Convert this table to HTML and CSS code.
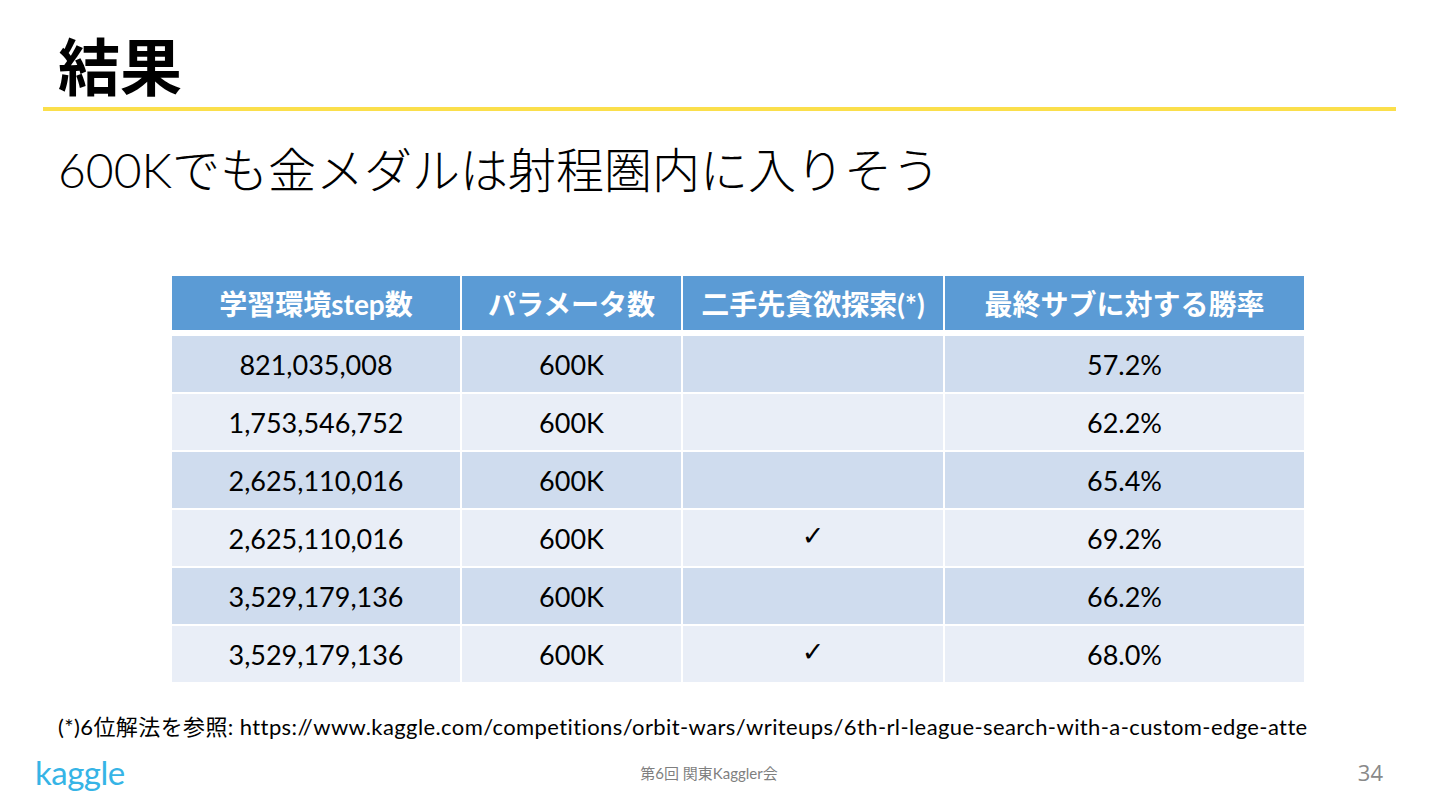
FILE: index.html
```html
<!DOCTYPE html>
<html lang="ja">
<head>
<meta charset="utf-8">
<title>結果</title>
<link rel="stylesheet" href="styles.css">
</head>
<body>
<div class="slide">
  <h1 class="title">結果</h1>
  <div class="rule"></div>
  <p class="subtitle">600Kでも金メダルは射程圏内に入りそう</p>

  <div class="table">
    <div class="row head">
      <div class="cell">学習環境step数</div>
      <div class="cell">パラメータ数</div>
      <div class="cell">二手先貪欲探索(*)</div>
      <div class="cell">最終サブに対する勝率</div>
    </div>
    <div class="row odd">
      <div class="cell">821,035,008</div>
      <div class="cell">600K</div>
      <div class="cell"></div>
      <div class="cell">57.2%</div>
    </div>
    <div class="row even">
      <div class="cell">1,753,546,752</div>
      <div class="cell">600K</div>
      <div class="cell"></div>
      <div class="cell">62.2%</div>
    </div>
    <div class="row odd">
      <div class="cell">2,625,110,016</div>
      <div class="cell">600K</div>
      <div class="cell"></div>
      <div class="cell">65.4%</div>
    </div>
    <div class="row even">
      <div class="cell">2,625,110,016</div>
      <div class="cell">600K</div>
      <div class="cell"><span class="check">✓</span></div>
      <div class="cell">69.2%</div>
    </div>
    <div class="row odd">
      <div class="cell">3,529,179,136</div>
      <div class="cell">600K</div>
      <div class="cell"></div>
      <div class="cell">66.2%</div>
    </div>
    <div class="row even">
      <div class="cell">3,529,179,136</div>
      <div class="cell">600K</div>
      <div class="cell"><span class="check">✓</span></div>
      <div class="cell">68.0%</div>
    </div>
  </div>

  <p class="note">(*)6位解法を参照: https://www.kaggle.com/competitions/orbit-wars/writeups/6th-rl-league-search-with-a-custom-edge-atte</p>

  <div class="footer">
    <div class="logo">kaggle</div>
    <div class="event">第6回 関東Kaggler会</div>
    <div class="page">34</div>
  </div>
</div>
</body>
</html>
```

FILE: styles.css
```css
html, body {
  margin: 0;
  padding: 0;
  background: #ffffff;
}

.slide {
  width: 1440px;
  height: 810px;
  display: flex;
  flex-direction: column;
  overflow: hidden;
  font-family: Lato, "Noto Sans CJK JP", sans-serif;
  color: #000000;
}

.title {
  margin: 33px 0 0 58px;
  font-family: "Noto Sans CJK JP", sans-serif;
  font-weight: 700;
  font-size: 62px;
  line-height: 62px;
  height: 62px;
}

.rule {
  margin: 12px 44px 0 43px;
  height: 4px;
  background: #fbdf4b;
}

.subtitle {
  margin: 35px 0 0 58px;
  font-family: Lato, "Noto Sans CJK JP", sans-serif;
  font-weight: 300;
  font-size: 48px;
  line-height: 48px;
  height: 48px;
}

.table {
  margin: 82px 0 0 172px;
  width: 1132px;
  display: flex;
  flex-direction: column;
  gap: 2px;
}

.row {
  display: grid;
  grid-template-columns: 288px 219px 260px 359px;
  column-gap: 2px;
  height: 56px;
}

.row.head {
  height: 54px;
  margin-bottom: 4px;
  background: #ffffff;
}

.cell {
  display: flex;
  align-items: center;
  justify-content: center;
  font-size: 27px;
  white-space: nowrap;
}

.head .cell {
  background: #5b9bd5;
  color: #ffffff;
  font-weight: 700;
  font-size: 28px;
}

.odd .cell {
  background: #cfdcee;
}

.even .cell {
  background: #e9eef7;
}

.check {
  font-family: "DejaVu Sans", sans-serif;
  font-size: 27px;
  margin-top: -6px;
}

.note {
  margin: 33px 0 0 58px;
  font-size: 22px;
  line-height: 24px;
  letter-spacing: 0.4px;
  white-space: nowrap;
}

.footer {
  margin-top: 15px;
  display: grid;
  grid-template-columns: 1fr auto 1fr;
  align-items: center;
  padding: 0 57px 0 35px;
}

.logo {
  font-family: Lato, sans-serif;
  font-size: 33px;
  line-height: 36px;
  color: #36b4e6;
  letter-spacing: -0.5px;
}

.event {
  font-family: Lato, "Noto Sans CJK JP", sans-serif;
  font-size: 15px;
  color: #7f7f7f;
}

.page {
  justify-self: end;
  font-family: "Open Sans", sans-serif;
  font-size: 22px;
  color: #898989;
}
```
